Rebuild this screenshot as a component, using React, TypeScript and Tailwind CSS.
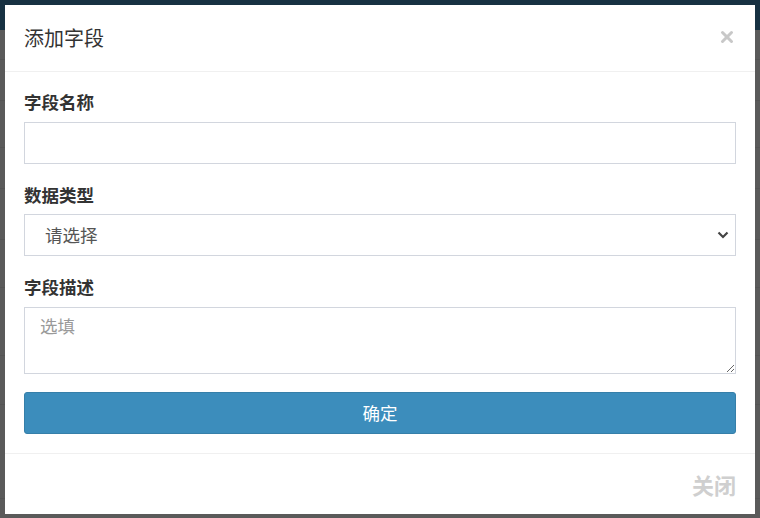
import { X } from "lucide-react";

const rows = [30, 41, 47, 41, 51, 48, 68, 49, 94, 24];

export default function App() {
  return (
    <div
      className="relative w-[760px] h-[518px] overflow-hidden bg-[#b4b4b4]"
      style={{ fontFamily: "'Noto Sans CJK SC', 'Noto Sans', sans-serif" }}
    >
      {/* page underneath */}
      <div className="h-[30px] bg-[#2e6284]" />
      <div className="flex flex-col">
        {rows.map((h, i) => (
          <div key={i} className="border-b border-[#a8a8a8] bg-[#b4b4b4]" style={{ height: h }} />
        ))}
      </div>

      {/* backdrop */}
      <div className="absolute inset-0 bg-black/50" />

      {/* modal */}
      <div className="absolute left-[5px] top-[5px] w-[750px] h-[509px] bg-white flex flex-col">
        <div className="h-[67px] flex items-center justify-between pl-[19px] pr-[19px] border-b border-[#f0f0f0]">
          <h4 className="text-[20px] text-[#333] font-normal leading-none">添加字段</h4>
          <X size={18} strokeWidth={4} className="text-[#c8c8c8] -mt-[3px]" />
        </div>

        <div className="px-[19px] pt-[19px] pb-[19px] flex flex-col border-b border-[#f0f0f0]">
          <label className="h-[22px] leading-[22px] text-[17.5px] font-bold text-[#333] mb-[9px]">字段名称</label>
          <input className="h-[42px] border border-[#d2d6de] mb-[20px] px-3 text-[17.5px] outline-none" />

          <label className="h-[22px] leading-[22px] text-[17.5px] font-bold text-[#333] mb-[8px]">数据类型</label>
          <div className="relative h-[42px] mb-[20px]">
            <select className="appearance-none w-full h-full border border-[#d2d6de] pl-[20px] text-[17.5px] text-[#555] bg-white outline-none">
              <option>请选择</option>
            </select>
            <svg className="absolute right-[7px] top-[16px] pointer-events-none" width="12" height="10" viewBox="0 0 12 10">
              <polyline points="1.5,2.5 6,7 10.5,2.5" fill="none" stroke="#444" strokeWidth="2.2" />
            </svg>
          </div>

          <label className="h-[22px] leading-[22px] text-[17.5px] font-bold text-[#333] mb-[9px]">字段描述</label>
          <textarea
            placeholder="选填"
            className="h-[67px] border border-[#d2d6de] mb-[18px] px-[15px] py-[5px] text-[17.5px] placeholder:text-[#999] outline-none"
          />

          <button className="h-[42px] rounded-[3px] bg-[#3c8dbc] border border-[#367fa9] text-white text-[17.5px]">确定</button>
        </div>

        <div className="flex-1 flex items-center justify-end pr-[19px]">
          <span className="text-[22px] font-bold text-[#cfcfcf]">关闭</span>
        </div>
      </div>
    </div>
  );
}
